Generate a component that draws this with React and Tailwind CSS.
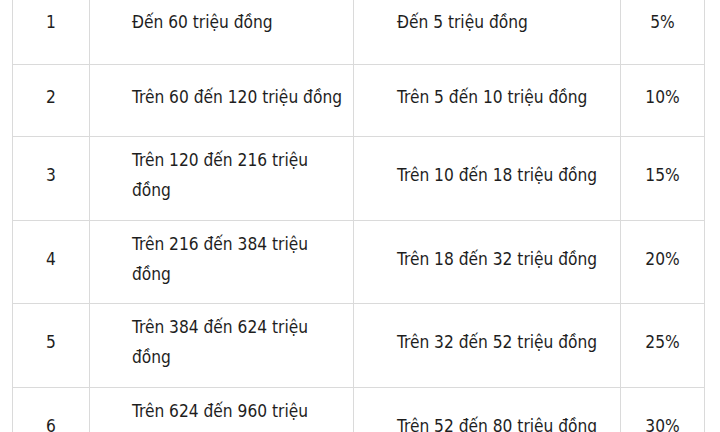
import React from "react";

const rows = [
    {n: "1", thu: "Đến 60 triệu đồng", thang: "Đến 5 triệu đồng", rate: "5%", h: "h-[78px]"},
    {n: "2", thu: "Trên 60 đến 120 triệu đồng", thang: "Trên 5 đến 10 triệu đồng", rate: "10%", h: "h-[72px]"},
    {n: "3", thu: "Trên 120 đến 216 triệu đồng", thang: "Trên 10 đến 18 triệu đồng", rate: "15%", h: "h-[84px]"},
    {n: "4", thu: "Trên 216 đến 384 triệu đồng", thang: "Trên 18 đến 32 triệu đồng", rate: "20%", h: "h-[83px]"},
    {n: "5", thu: "Trên 384 đến 624 triệu đồng", thang: "Trên 32 đến 52 triệu đồng", rate: "25%", h: "h-[84px]"},
    {n: "6", thu: "Trên 624 đến 960 triệu đồng", thang: "Trên 52 đến 80 triệu đồng", rate: "30%", h: "h-[84px]"},
];

function App() {
    return (
        <div className="w-[720px] h-[432px] overflow-hidden bg-white font-['DejaVu_Sans_Condensed','Liberation_Sans',sans-serif] text-[17.2px] leading-[30px] text-[#1e1e1e]">
            <table className="ml-[12px] -mt-[14px] w-[692px] table-fixed border-collapse">
                <colgroup>
                    <col className="w-[77px]" />
                    <col className="w-[264px]" />
                    <col className="w-[267px]" />
                    <col className="w-[84px]" />
                </colgroup>
                <tbody>
                    {rows.map((r) => (
                        <tr key={r.n} className={r.h}>
                            <td className="border border-[#dadada] pb-[7px] text-center align-middle">{r.n}</td>
                            <td className="border border-[#dadada] pl-[42px] pr-[8px] pb-[7px] align-middle">{r.thu}</td>
                            <td className="border border-[#dadada] pl-[43px] pr-[8px] pb-[7px] align-middle">{r.thang}</td>
                            <td className="border border-[#dadada] pb-[7px] text-center align-middle">{r.rate}</td>
                        </tr>
                    ))}
                </tbody>
            </table>
        </div>
    );
}

export default App;
